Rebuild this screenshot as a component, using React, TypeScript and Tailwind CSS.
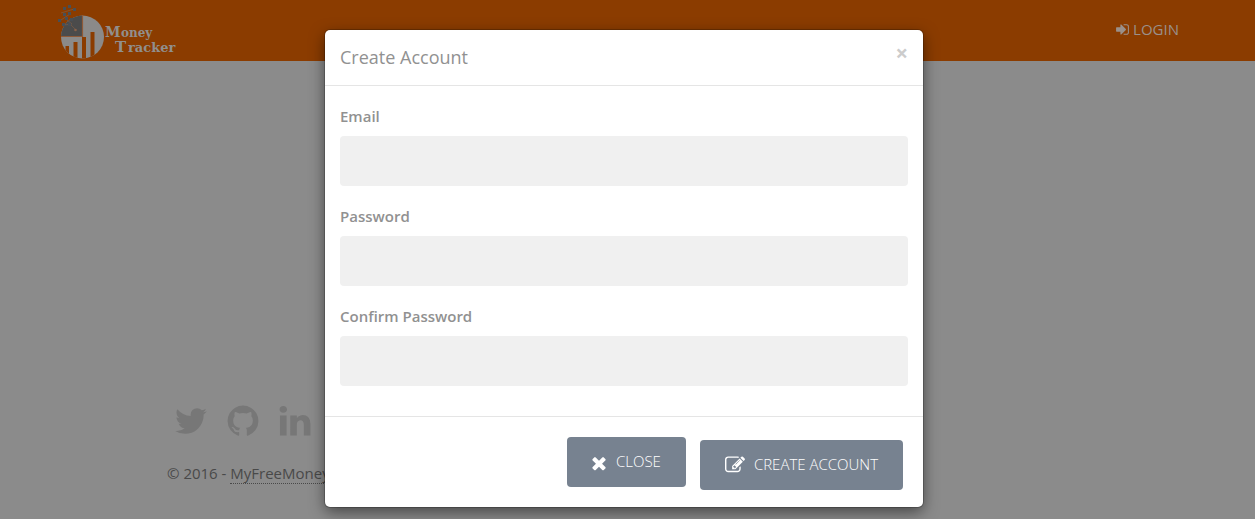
import React from "react";

type IconProps = { d: string; className: string };

const Icon = ({ d, className }: IconProps) => (
  <svg viewBox="0 0 1792 1792" fill="currentColor" aria-hidden="true" className={className}>
    <path d={d} />
  </svg>
);

const signIn =
  "M1312 896q0 26-19 45l-544 544q-19 19-45 19t-45-19-19-45v-288h-448q-26 0-45-19t-19-45v-384q0-26 19-45t45-19h448v-288q0-26 19-45t45-19 45 19l544 544q19 19 19 45zm352-352v704q0 119-84.5 203.5t-203.5 84.5h-320q-13 0-22.5-9.5t-9.5-22.5q0-4-1-20t-.5-26.5 3-23.5 10-19.5 20.5-6.5h320q66 0 113-47t47-113v-704q0-66-47-113t-113-47h-312l-11.5-1-11.5-3-8-5.5-7-9-2-13.5q0-4-1-20t-.5-26.5 3-23.5 10-19.5 20.5-6.5h320q119 0 203.5 84.5t84.5 203.5z";
const twitter =
  "M1684 408q-67 98-162 167 1 14 1 42 0 130-38 259.5t-115.5 248.5-184.5 210.5-258 146-323 54.5q-271 0-496-145 35 4 78 4 225 0 401-138-105-2-188-64.5t-114-159.5q33 5 61 5 43 0 85-11-112-23-185.5-111.5t-73.5-205.5v-4q68 38 146 41-66-44-105-115t-39-154q0-88 44-163 121 149 294.5 238.5t371.5 99.5q-8-38-8-74 0-134 94.5-228.5t228.5-94.5q140 0 236 102 109-21 205-78-37 115-142 178 93-10 186-50z";
const github =
  "M896 128q209 0 385.5 103t279.5 279.5 103 385.5q0 251-146.5 451.5t-378.5 277.5q-27 5-40-7t-13-30q0-3 .5-76.5t.5-134.5q0-97-52-142 57-6 102.5-18t94-39 81-66.5 53-105 20.5-150.5q0-119-79-206 37-91-8-204-28-9-81 11t-92 44l-38 24q-93-26-192-26t-192 26q-16-11-42.5-27t-83.5-38.5-85-13.5q-45 113-8 204-79 87-79 206 0 85 20.5 150t52.5 105 80.5 67 94 39 102.5 18q-39 36-49 103-21 10-45 15t-57 5-65.5-21.5-55.5-62.5q-19-32-48.5-52t-49.5-24l-20-3q-21 0-29 4.5t-5 11.5 9 14 13 12l7 5q22 10 43.5 38t31.5 51l10 23q13 38 44 61.5t67 30 69.5 7 55.5-3.5l23-4q0 38 .5 88.5t.5 54.5q0 18-13 30t-40 7q-232-77-378.5-277.5t-146.5-451.5q0-209 103-385.5t279.5-279.5 385.5-103z";
const linkedin =
  "M477 625v991h-330v-991h330zm21-306q1 73-50.5 122t-135.5 49h-2q-82 0-132-49t-50-122q0-74 51.5-122.5t134.5-48.5 133 48.5 51 122.5zm1166 729v568h-329v-530q0-105-40.5-164.5t-126.5-59.5q-63 0-105.5 34.5t-63.5 85.5q-11 30-11 81v553h-329q2-399 2-647t-1-296l-1-48h329v144h-2q20-32 41-56t56.5-52 87-43.5 114.5-15.5q171 0 275 113.5t104 332.5z";
const times =
  "M1490 1322q0 40-28 68l-136 136q-28 28-68 28t-68-28l-294-294-294 294q-28 28-68 28t-68-28l-136-136q-28-28-28-68t28-68l294-294-294-294q-28-28-28-68t28-68l136-136q28-28 68-28t68 28l294 294 294-294q28-28 68-28t68 28l136 136q28 28 28 68t-28 68l-294 294 294 294q28 28 28 68z";
const pencilSquare =
  "M888 1184l116-116-152-152-116 116v56h96v96h56zm440-720q-16-16-33 1l-350 350q-17 17-1 33t33-1l350-350q17-17 1-33zm80 594v190q0 119-84.5 203.5t-203.5 84.5h-832q-119 0-203.5-84.5t-84.5-203.5v-832q0-119 84.5-203.5t203.5-84.5h832q63 0 117 25 15 7 18 23 3 17-9 29l-49 49q-14 14-32 8-23-6-45-6h-832q-66 0-113 47t-47 113v832q0 66 47 113t113 47h832q66 0 113-47t47-113v-126q0-13 9-22l64-64q15-15 35-7t20 29zm-96-738l288 288-672 672h-288v-288zm444 132l-92 92-288-288 92-92q28-28 68-28t68 28l152 152q28 28 28 68t-28 68z";

const Logo = () => (
  <svg viewBox="0 0 122 61" className="h-[61px] w-[122px]" role="img" aria-label="Money Tracker">
    <defs>
      <clipPath id="disc">
        <circle cx="26.5" cy="37" r="21.5" />
      </clipPath>
    </defs>
    <g clipPath="url(#disc)">
      <rect x="5" y="15" width="44" height="45" fill="#8b8a89" />
      <path d="M5 15H26V37H5Z" fill="#4b4b4b" />
      <path d="M9.500 46h3.500v14h-3.500zM17.500 42h4v18h-4zM26 37h4v23h-4zM34.500 32h4v28h-4z" fill="#8b3c00" />
      <path d="M26.500 15V36.500H5" fill="none" stroke="#8f5a38" strokeWidth="1.200" />
    </g>
    <path d="M5 13L18 9M5 20L14 14M16 24L8 25M15 25l5 5M11 20l5 4" stroke="#7b5b45" strokeWidth="0.700" />
    <g fill="#484f56">
      <path d="M12 5h3v3h-3zM7 7h3v3H7zM17 8h3v3h-3zM12 12h3v3h-3zM7 13h3v3H7zM2 19h3v3H2zM9 17h3v3H9zM14 18h3v3h-3zM6 23h3v3H6zM12 23h3v3h-3z" />
    </g>
    <circle cx="19.500" cy="30" r="1.300" fill="#8a6249" />
    <g fill="#918f8d" fontFamily="'DejaVu Serif', serif" fontWeight="700">
      <text x="49" y="37" fontSize="14">M</text>
      <text x="65" y="37" fontSize="12">oney</text>
      <text x="59" y="52" fontSize="15">T</text>
      <text x="72" y="52" fontSize="13">racker</text>
    </g>
  </svg>
);

const fields = [
  { id: "email", label: "Email", type: "email" },
  { id: "password", label: "Password", type: "password" },
  { id: "confirm", label: "Confirm Password", type: "password" },
];

const socials = [
  { name: "Twitter", d: twitter },
  { name: "GitHub", d: github },
  { name: "LinkedIn", d: linkedin },
];

export default function App() {
  return (
    <div className="relative flex min-h-screen flex-col overflow-hidden bg-[#8b8b8b] font-['Open_Sans',sans-serif] text-[15px]">
      <header className="flex h-[61px] items-center justify-between bg-[#8b3c00] pr-[76px] pl-[56px]">
        <a href="#home"><Logo /></a>
        <a href="#login" className="flex items-center gap-[3px] pb-[2px] font-medium text-[#9a908a]">
          <Icon d={signIn} className="size-[15px]" />
          LOGIN
        </a>
      </header>
      <footer className="mt-auto px-[167px] pb-[35px] text-[#494949]">
        <div className="flex gap-[16px] pl-[6px] text-[#777777]">
          {socials.map((s) => (
            <a key={s.name} href="#social" aria-label={s.name}>
              <Icon d={s.d} className="size-[36px]" />
            </a>
          ))}
        </div>
        <p className="mt-[23px] leading-[22px]">
          © 2016 - <a href="#about" className="inline-block border-b border-dotted border-[#494949] leading-[20px]">MyFreeMoneyTracker</a>
        </p>
      </footer>

      <div className="absolute inset-0 flex items-start justify-center pt-[30px] pr-[7px]">
        <form
          role="dialog"
          aria-labelledby="dialog-title"
          className="w-full max-w-[598px] rounded-[5px] bg-white text-[#919191] shadow-[0_5px_15px_rgba(0,0,0,0.5),0_0_0_1px_rgba(0,0,0,0.2)]"
        >
          <div className="flex h-[56px] items-start justify-between border-b border-[#e5e5e5] px-[15px] pt-[15px]">
            <h1 id="dialog-title" className="text-[18px] leading-[25px]">Create Account</h1>
            <button type="button" aria-label="Dismiss" className="text-[22px] leading-[14px] font-bold text-[#cccccc]">×</button>
          </div>
          <div className="flex flex-col gap-[20px] px-[15px] pt-[20px] pb-[30px]">
            {fields.map((f) => (
              <div key={f.id}>
                <label htmlFor={f.id} className="block h-[30px] leading-[20px] font-semibold">{f.label}</label>
                <input id={f.id} type={f.type} className="block h-[50px] w-full rounded-[4px] bg-[#f0f0f0] px-4 outline-none" />
              </div>
            ))}
          </div>
          <div className="flex items-start justify-end gap-[14px] border-t border-[#e5e5e5] px-[20px] pt-[20px] pb-[17px] text-white">
            <button type="button" className="flex h-[50px] items-center gap-[7px] rounded-[4px] bg-[#778290] px-[25px] font-light">
              <Icon d={times} className="mt-[2px] -ml-[3px] size-[20px]" />
              <span className="pb-[2px]">CLOSE</span>
            </button>
            <button type="submit" className="mt-[3px] flex h-[50px] items-center gap-[9px] rounded-[4px] bg-[#778290] px-[25px] font-light">
              <Icon d={pencilSquare} className="size-[20px]" />
              <span className="pb-[2px]">CREATE ACCOUNT</span>
            </button>
          </div>
        </form>
      </div>
    </div>
  );
}
